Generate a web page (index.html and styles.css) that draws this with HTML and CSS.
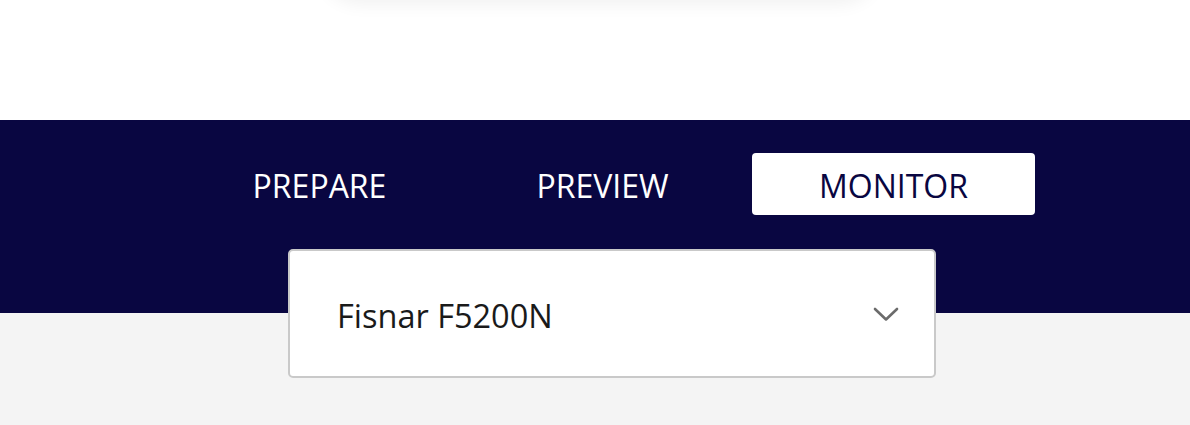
FILE: index.html
```html
<!DOCTYPE html>
<html>
<head>
<meta charset="utf-8">
<link rel="stylesheet" href="styles.css">
</head>
<body>
<div class="page">
  <div class="top">
    <div class="card-edge"></div>
  </div>
  <div class="band">
    <nav class="tabs">
      <div class="tab">PREPARE</div>
      <div class="tab">PREVIEW</div>
      <div class="tab active">MONITOR</div>
    </nav>
    <div class="select">
      <span class="select-value">Fisnar F5200N</span>
      <svg class="chevron" width="28" height="16" viewBox="0 0 28 16"><path d="M3 2 L14 12.5 L25 2" fill="none" stroke="#6b6b6b" stroke-width="2.6" stroke-linecap="round" stroke-linejoin="round"/></svg>
    </div>
  </div>
  <div class="rest"></div>
</div>
</body>
</html>
```
FILE: styles.css
```css
html, body {
  margin: 0;
  padding: 0;
  height: 100%;
  background: #f4f4f4;
  font-family: "Open Sans", "Noto Sans", "Liberation Sans", sans-serif;
}
.page {
  display: flex;
  flex-direction: column;
  height: 425px;
  overflow: hidden;
}
.top {
  height: 120px;
  background: #ffffff;
  flex: none;
  overflow: hidden;
}
.card-edge {
  width: 560px;
  height: 60px;
  margin: -60px auto 0 auto;
  position: relative;
  left: 5px;
  background: #fff;
  border-radius: 0 0 40px 40px;
  box-shadow: 0 4px 18px rgba(0,0,0,0.06);
}
.band {
  flex: none;
  height: 193px;
  box-sizing: border-box;
  background: #090641;
  padding-top: 33px;
  position: relative;
  z-index: 1;
}
.tabs {
  display: flex;
  padding-left: 178px;
}
.tab {
  width: 283px;
  height: 62px;
  padding-top: 2px;
  display: flex;
  align-items: center;
  justify-content: center;
  color: #ffffff;
  font-size: 32px;
  box-sizing: border-box;
}
.tab.active {
  margin-left: 8px;
  background: #ffffff;
  color: #090641;
  border-radius: 4px;
}
.select {
  margin: 34px 0 0 288px;
  width: 648px;
  height: 129px;
  box-sizing: border-box;
  border: 2px solid #c9c9c9;
  border-radius: 5px;
  background: #ffffff;
  display: flex;
  align-items: center;
  padding: 3px 34px 0 47px;
  justify-content: space-between;
}
.select-value {
  font-size: 32.5px;
  color: #1a1a1a;
}
.chevron {
  display: block;
}
.rest {
  flex: 1;
  background: #f4f4f4;
}
```
